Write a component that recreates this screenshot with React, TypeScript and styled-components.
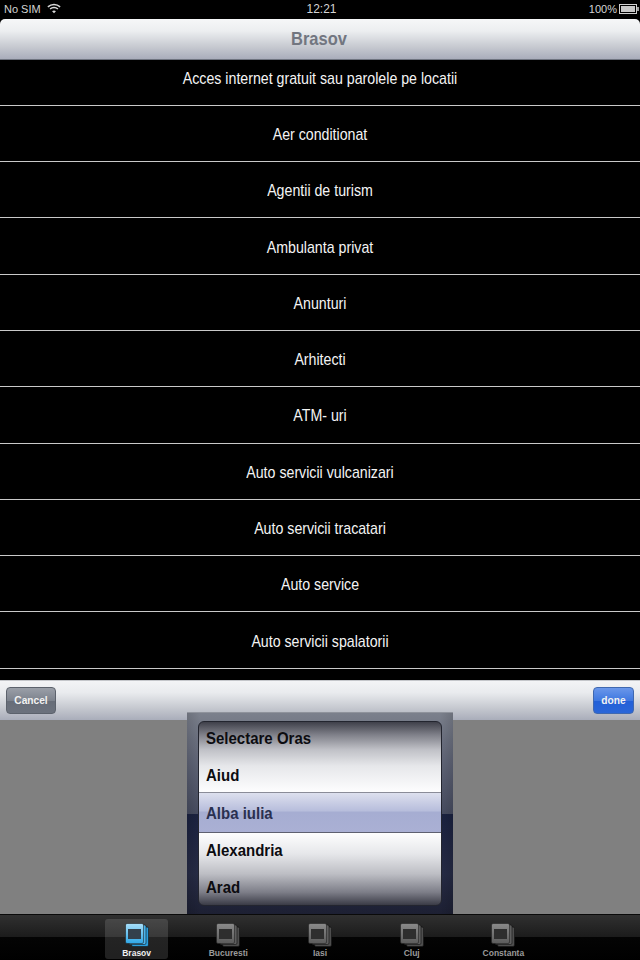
import React from 'react';
import styled, { createGlobalStyle } from 'styled-components';

const GlobalStyle = createGlobalStyle`
  html, body {
    margin: 0;
    padding: 0;
    background: #000;
  }
`;

const categories = [
  'Acces internet gratuit sau parolele pe locatii',
  'Aer conditionat',
  'Agentii de turism',
  'Ambulanta privat',
  'Anunturi',
  'Arhitecti',
  'ATM- uri',
  'Auto servicii vulcanizari',
  'Auto servicii tracatari',
  'Auto service',
  'Auto servicii spalatorii',
];

const cities = ['Selectare Oras', 'Aiud', 'Alba iulia', 'Alexandria', 'Arad'];
const tabs = ['Brasov', 'Bucuresti', 'Iasi', 'Cluj', 'Constanta'];

const WifiIcon = () => (
  <svg width="14" height="11" viewBox="0 0 16 12" fill="none" stroke="#d8d8d8" strokeWidth="1.7">
    <path d="M1 4.2C5 .6 11 .6 15 4.2" />
    <path d="M3.5 6.6C6 4.4 10 4.4 12.5 6.6" />
    <path d="M8 11.4 5.8 9C7 7.9 9 7.9 10.2 9Z" fill="#d8d8d8" stroke="none" />
  </svg>
);

const BatteryIcon = () => (
  <svg width="20" height="10" viewBox="0 0 20 10">
    <rect x="0.5" y="0.5" width="17" height="9" fill="none" stroke="#d0d0d0" />
    <rect x="2" y="2" width="14" height="6" fill="#c8c8c8" />
    <rect x="18" y="3" width="2" height="4" fill="#a0a0a0" />
  </svg>
);

const WindowsIcon = ({ active }: { active: boolean }) => {
  const id = active ? 'tabOn' : 'tabOff';
  return (
    <svg width="24" height="24" viewBox="0 0 24 24">
      <defs>
        <linearGradient id={id} x1="0" y1="0" x2="0" y2="1">
          <stop offset="0" stopColor={active ? '#a8def8' : '#8a8a8a'} />
          <stop offset="1" stopColor={active ? '#2fa8e8' : '#5c5c5c'} />
        </linearGradient>
      </defs>
      <rect x="6.5" y="4" width="17" height="19.5" rx="1.5" fill={active ? '#2a9ddc' : '#4e4e4e'} stroke="#111" strokeWidth="0.6" />
      <rect x="4" y="2" width="17" height="19.5" rx="1.5" fill={active ? '#49b4ec' : '#5e5e5e'} stroke="#111" strokeWidth="0.6" />
      <rect x="0.5" y="0.5" width="18" height="20" rx="1.5" fill={`url(#${id})`} stroke="#222" strokeWidth="0.6" />
      <rect x="3" y="6" width="13" height="10" fill={active ? '#33404c' : '#2e2e2e'} />
    </svg>
  );
};

export default function App() {
  return (
    <>
      <GlobalStyle />
      <Page>
        <StatusBar>
          <StatusLeft>
            <span>No SIM</span>
            <WifiIcon />
          </StatusLeft>
          <StatusTime>12:21</StatusTime>
          <StatusRight>
            <span>100%</span>
            <BatteryIcon />
          </StatusRight>
        </StatusBar>
        <NavBar>
          <NavTitle>Brasov</NavTitle>
        </NavBar>
        <ListView>
          <List>
            {categories.map((name) => (
              <Row key={name}>
                <RowLabel>{name}</RowLabel>
              </Row>
            ))}
          </List>
        </ListView>
        <Sheet>
          <Toolbar>
            <ToolButton>Cancel</ToolButton>
            <ToolButton $primary>done</ToolButton>
          </Toolbar>
          <PickerArea>
            <Picker>
              <Wheel>
                {cities.map((city, i) => (
                  <WheelItem key={city} $selected={i === 2}>
                    <WheelLabel>{city}</WheelLabel>
                  </WheelItem>
                ))}
              </Wheel>
            </Picker>
          </PickerArea>
        </Sheet>
        <TabBar>
          {tabs.map((tab, i) => (
            <Tab key={tab} $active={i === 0}>
              <WindowsIcon active={i === 0} />
              <TabLabel $active={i === 0}>{tab}</TabLabel>
            </Tab>
          ))}
        </TabBar>
      </Page>
    </>
  );
}

const Page = styled.div`
  width: 640px;
  height: 960px;
  display: flex;
  flex-direction: column;
  overflow: hidden;
  background: #000;
  font-family: 'Liberation Sans', Arial, sans-serif;
`;

const StatusBar = styled.div`
  height: 19px;
  flex: none;
  display: grid;
  grid-template-columns: 1fr auto 1fr;
  align-items: center;
  padding: 0 1px 2px 4px;
  box-sizing: border-box;
  color: #d4d4d4;
  font-size: 11px;
`;

const StatusLeft = styled.div`
  display: flex;
  align-items: center;
  gap: 6px;
`;

const StatusTime = styled.div`
  font-size: 12px;
`;

const StatusRight = styled.div`
  display: flex;
  align-items: center;
  justify-content: flex-end;
  gap: 2px;
`;

const NavBar = styled.div`
  height: 41px;
  flex: none;
  display: flex;
  align-items: center;
  justify-content: center;
  box-sizing: border-box;
  border-radius: 5px 5px 0 0;
  border-bottom: 1px solid #6f7480;
  background: linear-gradient(#f6f7f8 0%, #eceef0 30%, #c6c9d0 70%, #a9adbb 100%);
`;

const NavTitle = styled.span`
  color: #727680;
  font-size: 16.5px;
  font-weight: bold;
  transform: translateX(-1px) scaleY(1.08);
`;

const ListView = styled.div`
  height: 620px;
  flex: none;
  overflow: hidden;
  background: #000;
`;

const List = styled.div`
  margin-top: -10.5px;
`;

const Row = styled.div`
  height: 56.3px;
  box-sizing: border-box;
  display: flex;
  align-items: center;
  justify-content: center;
  padding-top: 1px;
  border-bottom: 1px solid #c9c9c9;
`;

const RowLabel = styled.span`
  color: #f4f4f4;
  font-size: 14.2px;
  transform: scaleY(1.12);
`;

const Sheet = styled.div`
  height: 234px;
  flex: none;
  display: flex;
  flex-direction: column;
  position: relative;
`;

const Toolbar = styled.div`
  height: 40px;
  flex: none;
  display: flex;
  align-items: center;
  justify-content: space-between;
  padding: 0 6px;
  border-top: 1px solid #c4c6ca;
  box-sizing: border-box;
  background: linear-gradient(#f3f4f6 0%, #e9ebee 30%, #c5c8cf 70%, #a9adba 100%);
`;

const ToolButton = styled.div<{ $primary?: boolean }>`
  height: 27px;
  width: ${(p) => (p.$primary ? '41px' : '50px')};
  display: flex;
  align-items: center;
  justify-content: center;
  box-sizing: border-box;
  border-radius: 4px;
  border: 1px solid ${(p) => (p.$primary ? '#3f68b0' : '#5c626c')};
  background: ${(p) =>
    p.$primary
      ? 'linear-gradient(#6a97ea 0%, #3f78e0 50%, #2260d8 52%, #2a66d8 100%)'
      : 'linear-gradient(#9a9fa8 0%, #7d838d 50%, #676d78 52%, #6c727d 100%)'};
  color: #f2f2f2;
  font-size: 10.2px;
  font-weight: bold;
`;

const PickerArea = styled.div`
  flex: 1;
  background: #808080;
`;

/* sits over the toolbar's lower edge */
const Picker = styled.div`
  position: absolute;
  left: 187px;
  top: 32px;
  width: 266px;
  height: 202px;
  box-sizing: border-box;
  padding: 8px 11px 8px;
  border-top: 1px solid #8f939c;
  background:
    linear-gradient(90deg, rgba(0, 0, 0, 0.12), rgba(0, 0, 0, 0) 5%, rgba(0, 0, 0, 0) 95%, rgba(0, 0, 0, 0.12)),
    linear-gradient(#7b808c 0%, #5f6476 25%, #474c60 50%, #1b2240 50.5%, #262b45 80%, #1d2033 100%);
`;

const Wheel = styled.div`
  height: 100%;
  box-sizing: border-box;
  display: flex;
  flex-direction: column;
  border-radius: 6px;
  overflow: hidden;
  border: 1px solid #23252f;
  background: linear-gradient(
    #3f404a 0%,
    #7f8089 7%,
    #bfc0c6 15%,
    #e6e7ea 24%,
    #fdfdfe 38%,
    #ffffff 60%,
    #e6e7ea 72%,
    #bdbec4 83%,
    #7d7e88 93%,
    #3a3b46 100%
  );
`;

const WheelItem = styled.div<{ $selected?: boolean }>`
  height: ${(p) => (p.$selected ? '41px' : '37.4px')};
  flex: none;
  display: flex;
  align-items: center;
  box-sizing: border-box;
  color: ${(p) => (p.$selected ? '#2a3050' : '#0c0c10')};
  padding-left: ${(p) => (p.$selected ? '8px' : '7px')};
  ${(p) =>
    p.$selected
      ? `
    margin: -1.3px -1px -2.3px;
    background: linear-gradient(#dde0ee 0%, #b8bedc 45%, #a6add2 50%, #aab0d4 100%);
    border-top: 1px solid #8a8c98;
    border-bottom: 1px solid #5e6070;
  `
      : ''}
  &:first-child {
    margin-top: -3.4px;
  }
`;

const WheelLabel = styled.span`
  font-size: 15px;
  font-weight: bold;
  transform: scaleY(1.1);
`;

const TabBar = styled.div`
  height: 46px;
  flex: none;
  box-sizing: border-box;
  display: flex;
  justify-content: center;
  gap: 28.7px;
  padding-top: 4px;
  border-top: 1px solid #0a0a0a;
  background: linear-gradient(#303030 0%, #1c1c1c 48%, #040404 50%, #000 100%);
`;

const Tab = styled.div<{ $active: boolean }>`
  width: 63px;
  height: 40px;
  display: flex;
  flex-direction: column;
  align-items: center;
  justify-content: flex-end;
  gap: 1px;
  border-radius: 3px;
  background: ${(p) => (p.$active ? 'rgba(255, 255, 255, 0.13)' : 'transparent')};
`;

const TabLabel = styled.span<{ $active: boolean }>`
  font-size: 8.5px;
  font-weight: bold;
  line-height: 11px;
  white-space: nowrap;
  color: ${(p) => (p.$active ? '#f0f0f0' : '#9a9a9a')};
`;
